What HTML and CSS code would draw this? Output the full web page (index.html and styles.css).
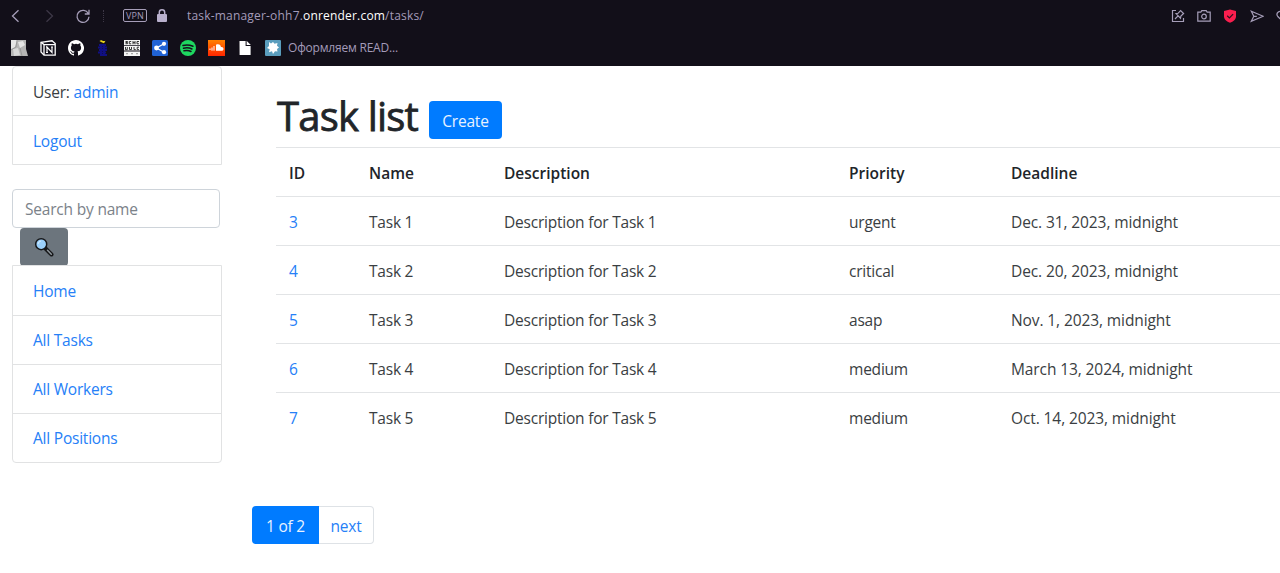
FILE: index.html
```html
<!DOCTYPE html>
<html lang="en">
<head>
<meta charset="utf-8">
<title>Task list</title>
<link rel="stylesheet" href="styles.css">
</head>
<body>
<header class="browser">
  <div class="address-row">
    <svg class="nav back" width="16" height="16" viewBox="0 0 16 16"><path d="M10.5 2.3 4.5 8l6 5.7"/></svg>
    <svg class="nav forward" width="16" height="16" viewBox="0 0 16 16"><path d="M5.5 2.3 11.500 8l-6 5.700"/></svg>
    <svg class="nav reload" width="16" height="16" viewBox="0 0 16 16"><path d="M13.300 5.500A6 6 0 1 0 14 8.700M14 1.800v4.200H9.800"/></svg>
    <span class="divider"></span>
    <span class="vpn">VPN</span>
    <svg class="lock" width="10" height="13" viewBox="0 0 10 13"><path d="M2.300 6V3.500a2.700 2.700 0 0 1 5.400 0V6" fill="none" stroke="#b9b0cd" stroke-width="1.500"/><rect y="5" width="10" height="8" rx="1" fill="#b9b0cd"/></svg>
    <span class="url">task-manager-ohh7.<b>onrender.com</b>/tasks/</span>
    <div class="actions">
      <svg width="14" height="14" viewBox="0 0 14 14"><path d="M5 1.500H1.500v11h11V9M4 10l3.300-3.300M5 4.700l4.500 4.500.4-2.200 2.700-2.500-3-3L7 4.300z"/></svg>
      <svg width="14" height="14" viewBox="0 0 14 14"><path d="M.8 3.200h3l1-1.600h4.400l1 1.600h3v9H.8z"/><circle cx="7" cy="7.500" r="2.300"/></svg>
      <svg width="14" height="14" viewBox="0 0 14 14"><path d="M7 .5 13 2v5.500c0 3-2.700 5-6 6.200C3.700 12.500 1 10.500 1 7.500V2z" fill="#fa1e4e" stroke="none"/><path d="m4.200 6.800 2.200 2.100 3.700-3.700" stroke="#29101d"/></svg>
      <svg width="14" height="14" viewBox="0 0 14 14"><path d="M1.300 2.200 13.200 7.300 1.300 12.300 3.800 7.300zM3.800 7.300h3"/></svg>
      <svg width="14" height="14" viewBox="0 0 14 14"><path d="M7 12.500 1.800 7.500C-.8 4 4 0 7 4c3-4 7.800 0 5.200 3.500z"/></svg>
    </div>
  </div>
  <nav class="bookmarks">
    <svg width="17" height="16" viewBox="0 0 17 16"><path fill="#b5b5b5" d="M0 0h15v9l2 7H0z"/><path fill="#e5e5e5" d="M0 0h6L4 7 0 9zM7 2l5-1 2 4-5 3z"/><path fill="#d8d8d8" d="m2 9 5-1 2 7-6 1z"/><path d="m6 0-1 7-5 3M9 8l2 8" stroke="#8c8c8c" stroke-width=".7" fill="none"/></svg>
    <svg width="16" height="16" viewBox="0 0 16 16"><path d="M1 2.300 12 .8 15.200 3.500v11.700H4L1 12z" fill="#14111c" stroke="#fff" stroke-width="1.300"/><path d="M1 2.300 4 4.600h11M4 4.600v10.500" fill="none" stroke="#fff" stroke-width="1.300"/><path d="M7 12.500v-5.500l5 5.500v-5.500M6 7h1.500M11 7h2M6 12.500h2" fill="none" stroke="#fff" stroke-width="1.200"/></svg>
    <svg width="16" height="16" viewBox="0 0 16 16"><path fill="#fff" d="M8 0C3.580 0 0 3.580 0 8c0 3.540 2.290 6.530 5.470 7.590.4.070.55-.17.55-.38v-1.490c-2.230.48-2.700-.95-2.700-.95-.36-.92-.89-1.170-.89-1.170-.73-.5.050-.49.050-.49.8.060 1.230.83 1.230.83.720 1.230 1.880.87 2.330.67.070-.52.280-.87.510-1.070-1.780-.2-3.640-.89-3.640-3.950 0-.87.310-1.590.82-2.150-.08-.2-.36-1.020.08-2.120 0 0 .67-.21 2.200.82a7.600 7.600 0 0 1 4 0c1.530-1.040 2.200-.82 2.200-.82.440 1.100.160 1.920.080 2.120.510.560.820 1.270.820 2.150 0 3.070-1.870 3.750-3.650 3.950.290.250.540.730.540 1.480v2.190c0 .21.150.46.550.38A8 8 0 0 0 8 0z"/></svg>
    <svg width="16" height="16" viewBox="0 0 16 16"><path d="M3.500 1c2-2 3 .8 6-.2L8 3.300 5 2z" fill="#e8d21a"/><path d="M3 5h7M2 7.500h9M3 10h8M2 12.500h8M4 15h7M5 5v10M8 5v10" stroke="#100f83" stroke-width="2" fill="none"/></svg>
    <svg width="16" height="16" viewBox="0 0 16 16"><path fill="#f5f5f5" d="M0 0h16v5.300H0zM0 6h16v4.600H0zM0 11.500h16V16H0z"/><path d="M3.800 1.500H1.800v1h1.700v1.200H1.500M7.200 1.500H5.300v2.300h1.900M9 1v3.300M11 1v3.300M9 2.700h2M15 1.500h-2v2.300h2M1.500 7v2.700h1.800V7M5.500 7v2.500h2V7M10 7v2.600h1.800M15 7.200h-1.800v2.400H15M2.500 13.700h1M7.500 13.700h1M12.500 13.700h1" stroke="#222" stroke-width=".9" fill="none"/></svg>
    <svg width="16" height="16" viewBox="0 0 16 16"><rect width="16" height="16" rx="1.500" fill="#2062d4"/><path d="M12 3.800 4.500 8l7.500 4.200" stroke="#fff" stroke-width="1.300" fill="none"/><g fill="#fff"><circle cx="12" cy="3.800" r="2.100"/><circle cx="4.500" cy="8" r="2.400"/><circle cx="12" cy="12.200" r="2.100"/></g></svg>
    <svg width="16" height="16" viewBox="0 0 16 16"><circle cx="8" cy="8" r="8" fill="#1ed760"/><path d="M3 5.500q5-1.500 10 .8M3.500 8.200q4.500-1.300 8.500.8M4 10.800q4-1 7 .7" fill="none" stroke="#14111c" stroke-width="1.500" stroke-linecap="round"/></svg>
    <svg width="17" height="16" viewBox="0 0 17 16"><defs><linearGradient id="cloud-bg" x2="0" y2="1"><stop stop-color="#ff8000"/><stop offset="1" stop-color="#ff2600"/></linearGradient></defs><path fill="url(#cloud-bg)" d="M0 0h17v16H0z"/><path fill="#fff" d="M8 4.800c3-1.300 4.800.5 4.900 2.300 1.700-.3 2.600.7 2.600 1.800 0 1-.8 1.800-1.800 1.800H8z"/><path d="M2 8.500V10M4 7.500v3.200M6 6v4.700" stroke="#fff"/></svg>
    <svg width="16" height="16" viewBox="0 0 16 16"><path fill="#fff" d="M2.500 1H8.600v5h5v9h-11z"/><path fill="#fff" d="m9.600.8 4.200 4.200H9.600z"/></svg>
    <svg width="16" height="16" viewBox="0 0 16 16"><rect width="16" height="16" rx="1" fill="#5a9dbd"/><path fill="#fff" d="m4 2 2 1.500L8 2l1.500 1.700L12.500 3l-.5 2.800 2 1.700-2 1.500.5 2.500-2.500-.3L8 14l-1-2.800-3 1 .7-3L2 8l2-2z"/></svg>
    <span class="bookmark-label">Оформляем READ...</span>
  </nav>
</header>
<div class="layout">
  <aside class="sidebar">
    <ul class="list-group account">
      <li>User: <a>admin</a></li>
      <li><a>Logout</a></li>
    </ul>
    <form class="search">
      <input type="text" placeholder="Search by name">
      <button type="button" aria-label="Search"><svg width="20" height="20" viewBox="0 0 20 20"><path d="m11.500 11.500 6 6" stroke="#161719" stroke-width="4" stroke-linecap="round"/><path d="m13.500 13.300 3.800 3.900" stroke="#8e969c" stroke-width="1.500" stroke-linecap="round"/><circle cx="7.200" cy="7.200" r="5.500" fill="#9bd0fb" stroke="#161719" stroke-width="1.500"/><path d="M4 7a3.500 3.500 0 0 1 3-3" stroke="#d5edff" fill="none"/></svg></button>
    </form>
    <ul class="list-group menu">
      <li><a>Home</a></li>
      <li><a>All Tasks</a></li>
      <li><a>All Workers</a></li>
      <li><a>All Positions</a></li>
    </ul>
  </aside>
  <main class="content">
    <div class="heading"><h1>Task list</h1><a class="create">Create</a></div>
    <table class="tasks">
      <colgroup><col class="c-id"><col class="c-name"><col class="c-desc"><col class="c-priority"><col></colgroup>
      <tr><th>ID</th><th>Name</th><th>Description</th><th>Priority</th><th>Deadline</th></tr>
      <tr><td><a>3</a></td><td>Task 1</td><td>Description for Task 1</td><td>urgent</td><td>Dec. 31, 2023, midnight</td></tr>
      <tr><td><a>4</a></td><td>Task 2</td><td>Description for Task 2</td><td>critical</td><td>Dec. 20, 2023, midnight</td></tr>
      <tr><td><a>5</a></td><td>Task 3</td><td>Description for Task 3</td><td>asap</td><td>Nov. 1, 2023, midnight</td></tr>
      <tr><td><a>6</a></td><td>Task 4</td><td>Description for Task 4</td><td>medium</td><td>March 13, 2024, midnight</td></tr>
      <tr><td><a>7</a></td><td>Task 5</td><td>Description for Task 5</td><td>medium</td><td>Oct. 14, 2023, midnight</td></tr>
    </table>
    <div class="pagination"><span class="current">1 of 2</span><a class="next">next</a></div>
  </main>
</div>
</body>
</html>
```
FILE: styles.css
```css
* { box-sizing: border-box; }
body { margin: 0; height: 573px; overflow: hidden; background: #fff; color: #3a3e42; font: 15.5px/24px "Open Sans", "Noto Sans", sans-serif; letter-spacing: -.22px; }
a { color: #2680f7; text-decoration: none; }
svg { display: block; flex: none; }
.browser { height: 66px; background: #120f19; color: #a49bb9; overflow: hidden; }
.address-row { height: 31px; display: flex; align-items: center; padding-left: 8px; }
.nav { fill: none; stroke: #a69eb9; stroke-width: 1.3; }
.forward { margin-left: 17px; stroke: #3d3847; }
.reload { margin-left: 18px; }
.divider { height: 12px; margin-left: 12px; border-left: 1px dotted #3d3847; }
.vpn { width: 24px; height: 13px; margin-left: 19px; border: 1px solid #a69eb9; border-radius: 2px; font-size: 9px; line-height: 11px; text-align: center; letter-spacing: .2px; }
.lock { margin-left: 10px; }
.url { margin-left: 20px; font-size: 12px; letter-spacing: .19px; white-space: nowrap; }
.url b { font-weight: 400; color: #fff; }
.actions { display: flex; gap: 12.3px; margin-left: auto; margin-right: -10px; }
.actions svg { fill: none; stroke: #a69eb9; stroke-width: 1.2; }
.bookmarks { height: 34px; display: flex; align-items: center; gap: 12px; padding-left: 11px; }
.bookmark-label { margin-left: -5px; font-size: 12px; letter-spacing: -.2px; }
.layout { display: flex; }
.sidebar { width: 252px; flex: none; padding-left: 12px; }
.list-group { list-style: none; margin: 0; padding: 0; width: 210px; border: 1px solid #e1e2e3; }
.list-group li { height: 49px; padding: 12px 20px; }
.list-group li + li { border-top: 1px solid #e1e2e3; }
.account { height: 99px; border-radius: 4px 4px 0 0; }
.account li:first-child { height: 48px; padding-top: 13px; }
.account li:last-child { padding-top: 13px; }
.menu { height: 198px; border-radius: 0 0 4px 4px; }
.menu li:first-child { padding-top: 13px; }
.search { margin-top: 24px; height: 76px; }
.search input { display: block; width: 208px; height: 39px; padding: 2px 12px 1px; border: 1px solid #ced4da; border-radius: 4px; background: #fff; font: inherit; letter-spacing: -.2px; }
.search input::placeholder { color: #7b8289; opacity: 1; }
.search button { display: flex; align-items: center; justify-content: center; width: 48px; height: 38px; margin: 0 0 0 8px; padding: 0; border: 0; border-radius: 4px; background: #6c757d; }
.content { flex: 1; min-width: 0; }
.heading { height: 81px; display: flex; padding-left: 25px; }
h1 { margin: 26px 0 0; width: 152px; font-size: 40px; line-height: 48px; font-weight: 400; letter-spacing: -.8px; color: #212529; -webkit-text-stroke: .8px #212529; white-space: nowrap; }
.create { width: 73px; height: 38px; margin-top: 35px; padding-top: 8px; background: #007bff; border-radius: 4px; color: #e8f2ff; text-align: center; }
.tasks { width: 1004px; margin-left: 24px; border-collapse: collapse; table-layout: fixed; }
.tasks tr { height: 49px; }
.tasks th, .tasks td { padding: 1px 12px 0; border-top: 1px solid #e2e4e6; text-align: left; white-space: nowrap; }
.tasks th:first-child, .tasks td:first-child { padding-left: 13px; }
.tasks td:last-child { letter-spacing: -.1px; }
.tasks th { color: #212529; font-weight: 600; letter-spacing: 0; }
.c-id { width: 81px; }
.c-name { width: 135px; }
.c-desc { width: 345px; }
.c-priority { width: 162px; }
.pagination { display: flex; margin-top: 64px; height: 38px; }
.current { width: 67px; padding-top: 8px; text-align: center; background: #007bff; color: #e8f2ff; border-radius: 4px 0 0 4px; }
.next { width: 55px; padding-top: 7px; text-align: center; border: 1px solid #dee2e6; border-left: 0; border-radius: 0 4px 4px 0; }
```
